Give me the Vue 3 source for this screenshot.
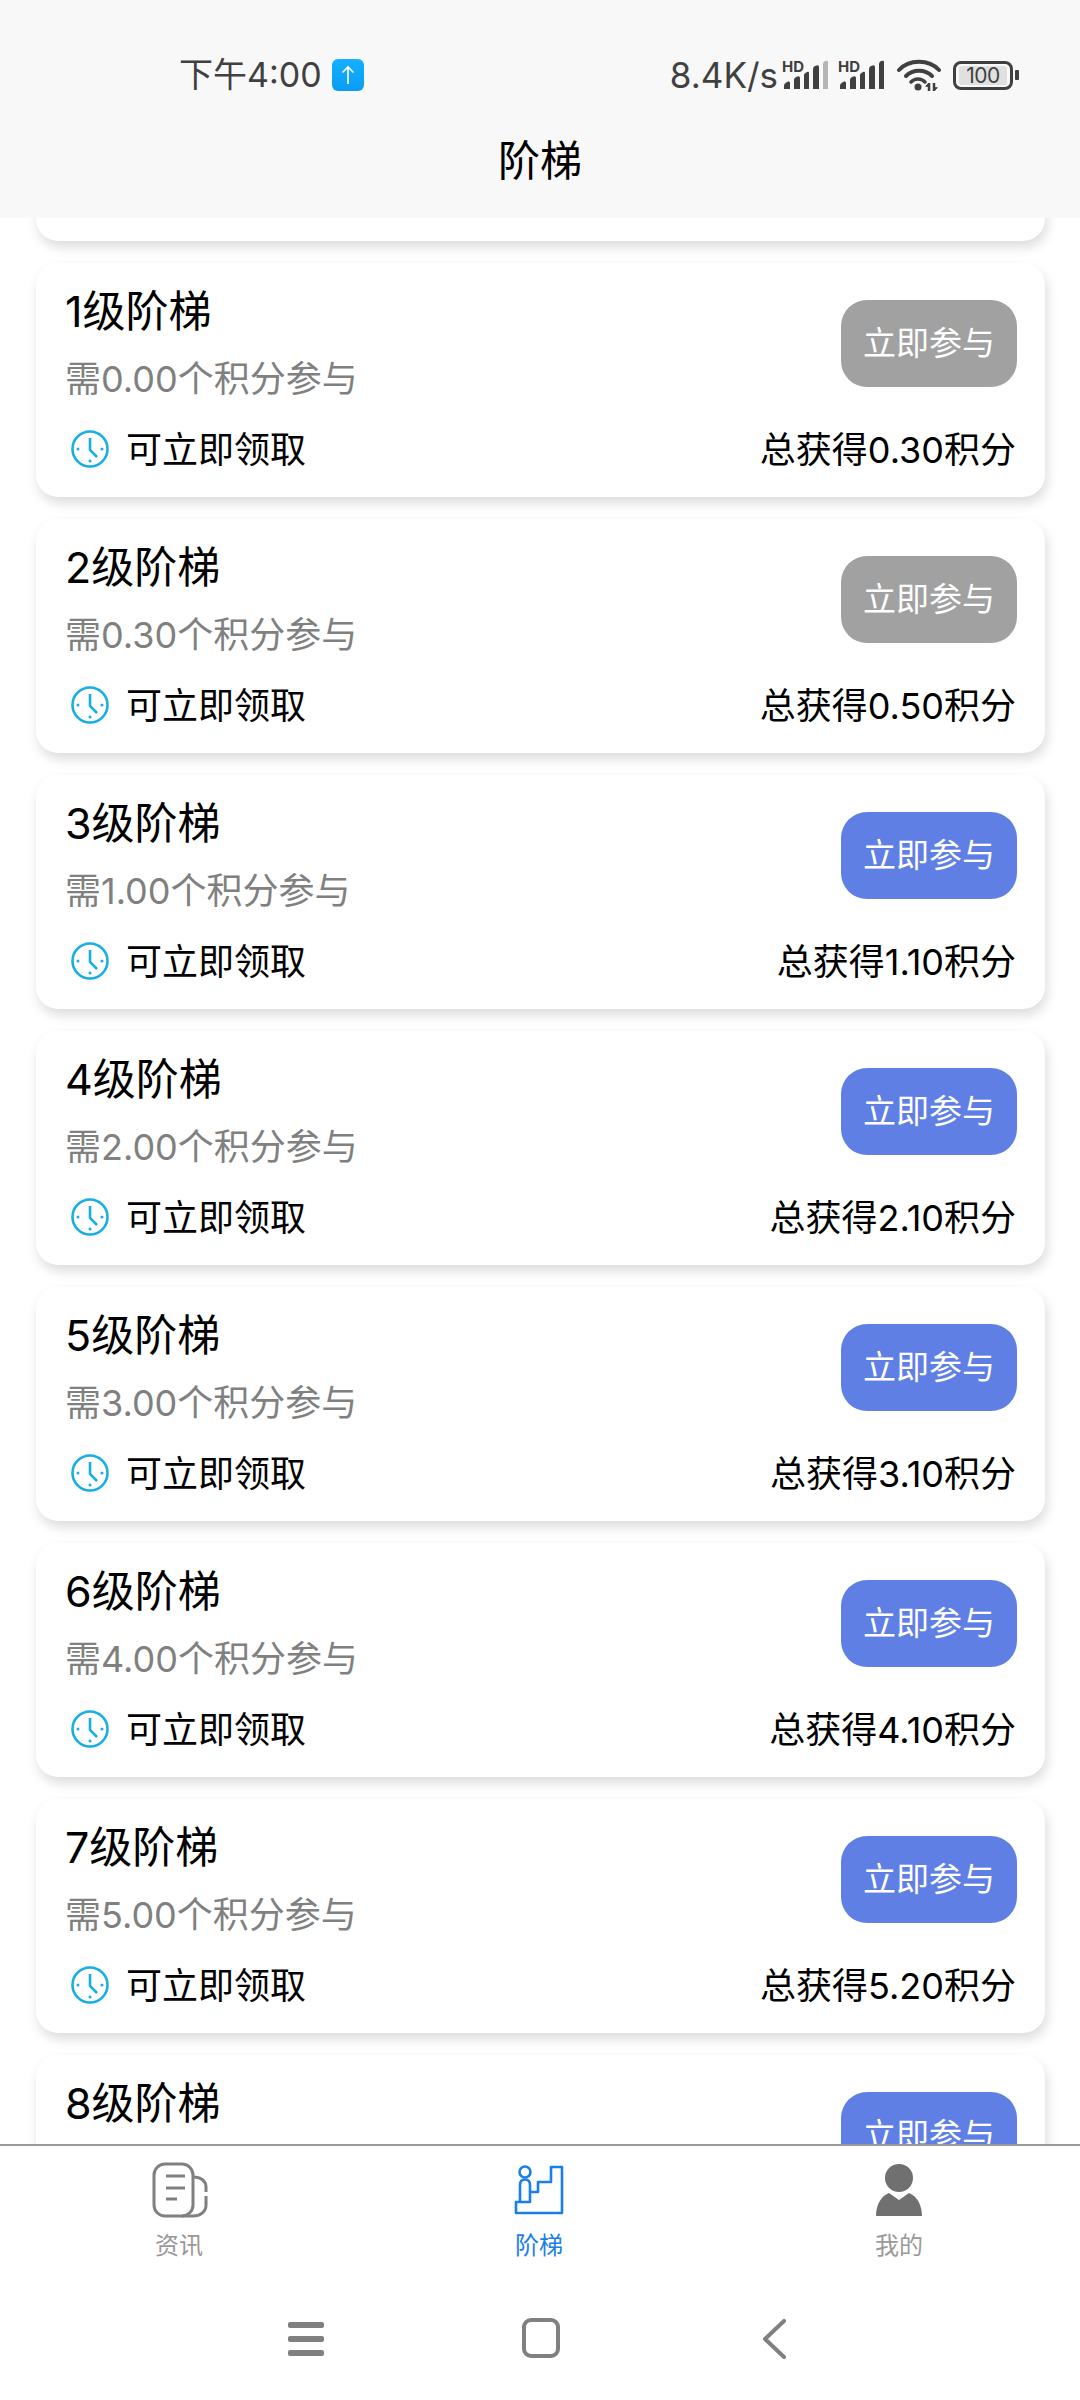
<script setup>
const tiers = [
  { level: 0, need: '0.00', total: '0.10', off: true },
  { level: 1, need: '0.00', total: '0.30', off: true },
  { level: 2, need: '0.30', total: '0.50', off: true },
  { level: 3, need: '1.00', total: '1.10', off: false },
  { level: 4, need: '2.00', total: '2.10', off: false },
  { level: 5, need: '3.00', total: '3.10', off: false },
  { level: 6, need: '4.00', total: '4.10', off: false },
  { level: 7, need: '5.00', total: '5.20', off: false },
  { level: 8, need: '6.00', total: '6.20', off: false }
]
const bars = [
  'M2 29V25.500Q2 24 3.500 23L6 21.500Q8 21 8 23V29Z',
  'M12 29V19.500Q12 18 14 17Q18 15 18 18V29Z',
  'M22 29V15Q22 13.500 24 12.500Q27 11 27 13V29Z',
  'M31 29V9Q31 7 33 6Q37 4 37 7V29Z'
]
const lastBar = 'M41 29V4Q41 2 43 1Q46 0 46 2V29Z'
</script>

<template>
  <div class="page">
    <header class="top">
      <div class="status">
        <div class="status-left">
          <span class="time">下午4:00</span>
          <span class="badge">
            <svg width="16" height="20" viewBox="0 0 16 20" fill="none" stroke="#fff" stroke-width="1.600"><path d="M8 19V2M2.500 7.500 8 2l5.500 5.500" /></svg>
          </span>
        </div>
        <div class="status-right">
          <span class="speed">8.4K/s</span>
          <svg class="sig" width="48" height="30" viewBox="0 0 48 30">
            <text x="0" y="12" class="hd">HD</text>
            <path v-for="d in bars" :key="d" :d="d" fill="#404040" />
            <path :d="lastBar" fill="#b5b5b5" />
          </svg>
          <svg class="sig second" width="48" height="30" viewBox="0 0 48 30">
            <text x="0" y="12" class="hd">HD</text>
            <path v-for="d in bars" :key="d" :d="d" fill="#404040" />
            <path :d="lastBar" fill="#404040" />
          </svg>
          <svg class="wifi" width="44" height="33" viewBox="0 0 44 33" fill="none" stroke="#404040" stroke-width="4" stroke-linecap="round">
            <path d="M2 11C12 0 32 0 42 11" />
            <path d="M9 17C16 10 28 10 35 17" />
            <path d="M14 23C18 19 24 19 28 23" stroke-width="3.500" />
            <circle cx="21" cy="28" r="3.500" fill="#404040" stroke="none" />
            <path d="M32 32V24M37 32V24" stroke-width="2.500" stroke-linecap="butt" />
            <path d="M29 27 32 24V27ZM40 29 37 32V29Z" stroke-width="1" fill="#404040" />
          </svg>
          <div class="battery">
            <div class="battery-body"><span class="battery-fill">100</span></div>
            <span class="battery-tip"></span>
          </div>
        </div>
      </div>
      <h1 class="title">阶梯</h1>
    </header>

    <main class="list">
      <section v-for="t in tiers" :key="t.level" class="card">
        <div class="card-top">
          <div>
            <div class="name">{{ t.level }}级阶梯</div>
            <div class="need">需{{ t.need }}个积分参与</div>
          </div>
          <button class="join" :class="{ off: t.off }">立即参与</button>
        </div>
        <div class="card-bottom">
          <div class="claim">
            <svg width="38" height="38" viewBox="0 0 38 38" fill="none" stroke="#18aee6">
              <circle cx="19" cy="19" r="17.500" stroke-width="2.600" />
              <path d="M19 8V20L26 27" stroke-width="2.600" />
              <circle cx="19" cy="31" r="1.500" fill="#18aee6" stroke="none" />
              <circle cx="7" cy="19" r="1.500" fill="#18aee6" stroke="none" />
              <circle cx="31" cy="19" r="1.500" fill="#18aee6" stroke="none" />
            </svg>
            <span class="lift">可立即领取</span>
          </div>
          <span class="total lift">总获得{{ t.total }}积分</span>
        </div>
      </section>
    </main>

    <footer class="bottom">
      <nav class="tabs">
        <div class="tab">
          <svg width="57" height="56" viewBox="0 0 57 56" fill="none" stroke="#808080" stroke-width="3">
            <rect x="3" y="2" width="39" height="52" rx="11" />
            <path d="M42 15C50 15 55 19 55 25V30M55 34V43C55 50 49 54 42 54H31" />
            <path d="M15 14H34M15 26H34M15 37H26" />
          </svg>
          <span>资讯</span>
        </div>
        <div class="tab active">
          <svg width="50" height="50" viewBox="0 0 50 50" fill="none" stroke="#1a7fe8" stroke-width="2.600" stroke-linejoin="round">
            <path d="M37 2H48V48H2V37H16V27H24V17H37Z" />
            <circle cx="11" cy="7" r="5.500" />
            <path d="M6 37V20C6 16 8 14.500 11 14.500C14 14.500 16 16 16 20V27" />
          </svg>
          <span>阶梯</span>
        </div>
        <div class="tab">
          <svg width="48" height="54" viewBox="0 0 48 54" fill="#707070">
            <circle cx="24" cy="15" r="14" />
            <path d="M14 30 24 37 34 30C42 33 47 42 47 53H1C1 42 6 33 14 30Z" />
          </svg>
          <span>我的</span>
        </div>
      </nav>
      <div class="sysnav">
        <svg width="38" height="36" viewBox="0 0 38 36" fill="#808080">
          <rect x="1" y="1" width="36" height="6" rx="2" />
          <rect x="1" y="15" width="36" height="6" rx="2" />
          <rect x="1" y="29" width="36" height="6" rx="2" />
        </svg>
        <svg class="home" width="38" height="40" viewBox="0 0 38 40" fill="none" stroke="#808080" stroke-width="4">
          <rect x="2" y="2" width="34" height="36" rx="7" />
        </svg>
        <svg width="24" height="40" viewBox="0 0 24 40" fill="none" stroke="#808080" stroke-width="4" stroke-linecap="round" stroke-linejoin="round">
          <path d="M22 2 3 20 22 38" />
        </svg>
      </div>
    </footer>
  </div>
</template>

<style scoped>
.page {
  width: 1080px;
  height: 2400px;
  display: flex;
  flex-direction: column;
  overflow: hidden;
  background: #fff;
  font-family: Inter, "Noto Sans CJK SC", sans-serif;
  color: #000;
}
.top {
  flex: 0 0 218px;
  background: #f8f8f8;
  position: relative;
  z-index: 2;
  display: flex;
  flex-direction: column;
}
.status {
  height: 128px;
  padding: 56px 61px 0 179px;
  box-sizing: border-box;
  display: flex;
  justify-content: space-between;
  align-items: flex-start;
  color: #404040;
}
.status-left,
.status-right {
  display: flex;
  align-items: center;
  height: 38px;
}
.time {
  font-size: 34px;
  line-height: 38px;
}
.badge {
  width: 32px;
  height: 32px;
  margin-left: 10px;
  border-radius: 6px;
  background: linear-gradient(#15b0ff, #0a9cf5);
  display: flex;
  align-items: center;
  justify-content: center;
}
.speed {
  font-size: 35px;
  line-height: 38px;
}
.sig {
  margin-left: 4px;
  overflow: visible;
}
.sig.second {
  margin-left: 8px;
}
.hd {
  font: 700 15px Inter, sans-serif;
  fill: #404040;
}
.wifi {
  margin-left: 11px;
}
.battery {
  margin-left: 12px;
  display: flex;
  align-items: center;
}
.battery-body {
  width: 60px;
  height: 29px;
  border: 3px solid #404040;
  border-radius: 8px;
  box-sizing: border-box;
  padding: 2px 3px;
  display: flex;
}
.battery-fill {
  flex: 1;
  background: #e0e0e0;
  border-radius: 2px;
  font-size: 21px;
  line-height: 19px;
  text-align: center;
  letter-spacing: -0.500px;
}
.battery-tip {
  width: 4px;
  height: 10px;
  margin-left: 2px;
  background: #404040;
  border-radius: 1px;
}
.title {
  margin: 8px 0 0;
  font-size: 42px;
  font-weight: 400;
  line-height: 50px;
  text-align: center;
}
.list {
  flex: 1;
  min-height: 0;
  overflow: hidden;
  padding: 0 35px 0 36px;
  margin-top: -211px;
  display: flex;
  flex-direction: column;
  gap: 22px;
}
.card {
  flex: 0 0 234px;
  box-sizing: border-box;
  background: #fff;
  border-radius: 22px;
  box-shadow: 2px 6px 12px rgba(0, 0, 0, 0.14);
  padding: 24px 29px 26px 29px;
  display: flex;
  flex-direction: column;
}
.card-top {
  display: flex;
  justify-content: space-between;
  align-items: center;
}
.name {
  font-size: 43px;
  line-height: 48px;
}
.need {
  margin-top: 20px;
  margin-bottom: -1px;
  font-size: 36px;
  line-height: 48px;
  color: #808080;
}
.join {
  width: 176px;
  height: 87px;
  margin-right: -1px;
  border: 0;
  border-radius: 26px;
  padding: 0 0 5px;
  background: #5f7fe5;
  color: #fff;
  font: inherit;
  font-size: 33px;
  position: relative;
  top: -1px;
}
.join.off {
  background: #a1a1a1;
}
.card-bottom {
  margin-top: 25px;
  height: 44px;
  display: flex;
  justify-content: space-between;
  align-items: center;
  font-size: 36px;
}
.lift {
  padding-bottom: 5px;
}
.claim {
  display: flex;
  align-items: center;
  gap: 17px;
  padding-left: 6px;
}
.bottom {
  flex: 0 0 256px;
  height: 256px;
  box-sizing: border-box;
  border-top: 2px solid #999;
  background: #fff;
  position: relative;
  z-index: 2;
}
.tabs {
  display: grid;
  grid-template-columns: 358px 362px 358px;
  padding-top: 16px;
}
.tab {
  display: flex;
  flex-direction: column;
  align-items: center;
  color: #999;
  font-size: 24px;
}
.tab svg {
  height: 56px;
}
.tab span {
  margin-top: 13px;
  line-height: 30px;
}
.tab.active {
  color: #1a7fe8;
}
.sysnav {
  position: absolute;
  left: 287px;
  top: 173px;
  width: 499px;
  display: flex;
  justify-content: space-between;
  align-items: center;
}
.home {
  position: relative;
  left: -3px;
  top: -1px;
}
</style>

<style>
html,
body {
  margin: 0;
}
</style>
